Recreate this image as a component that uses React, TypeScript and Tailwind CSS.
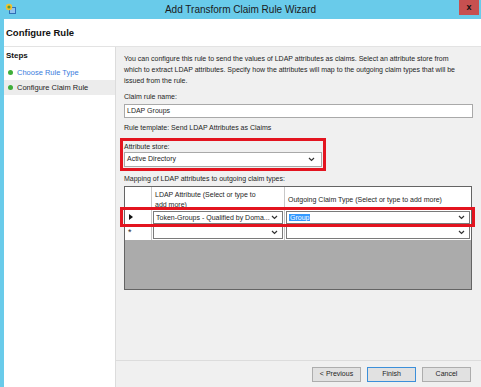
import React from 'react';

const font = { fontFamily: '"Liberation Sans", Arial, sans-serif' };

function Chevron({ className = '' }: { className?: string }) {
  return (
    <svg width="7" height="5" viewBox="0 0 7 5" className={className}>
      <path d="M1 1 L3.5 3.5 L6 1" fill="none" stroke="#333" strokeWidth="1.2" />
    </svg>
  );
}

function Combo({ text, selected }: { text?: string; selected?: boolean }) {
  return (
    <div className="flex h-[13px] w-full items-center justify-between border border-[#7a7a7a] bg-white pl-[2px] pr-[4px]">
      <span className="truncate text-[7px] leading-[9px] text-[#1e1e1e]">
        {selected ? <span className="bg-[#3399ff] px-[1px] text-white">{text}</span> : text}
      </span>
      <Chevron />
    </div>
  );
}

function WizardButton({ label, primary }: { label: string; primary?: boolean }) {
  return (
    <button
      type="button"
      className={`h-[15px] w-[49px] border bg-[#e1e1e1] text-[7px] text-[#1e1e1e] ${
        primary ? 'border-[#3c8fd9]' : 'border-[#adadad]'
      }`}
    >
      {label}
    </button>
  );
}

export default function App() {
  return (
    <div className="flex h-[387px] w-[481px] flex-col overflow-hidden bg-[#69cbea]" style={font}>
      {/* Title bar */}
      <div className="relative flex h-[19px] shrink-0 items-center justify-center">
        <svg width="12" height="12" viewBox="0 0 12 12" className="absolute left-[5px] top-[3px]">
          <rect x="4" y="4" width="7" height="7" fill="#2f6fb7" />
          <rect x="5" y="5" width="5" height="5" fill="#8fc3ef" />
          <circle cx="4" cy="4" r="3.2" fill="#f2c230" />
          <circle cx="4" cy="4" r="1.6" fill="#5a9a3c" />
        </svg>
        <span className="text-[10px] text-[#1a1a1a]">Add Transform Claim Rule Wizard</span>
        <div className="absolute right-[2px] top-0 flex h-[15px] w-[20px] items-center justify-center bg-[#c75050] text-[9px] font-bold leading-none text-[#111]">
          x
        </div>
      </div>

      <div className="ml-[4px] flex min-h-0 flex-1 flex-col bg-white">
        {/* Page header */}
        <div className="flex h-[28px] shrink-0 items-center border-b border-[#e3e3e3] pl-[2px] pt-[2px]">
          <span className="text-[9.5px] font-bold text-[#111]">Configure Rule</span>
        </div>

        <div className="flex min-h-0 flex-1">
          {/* Steps */}
          <div className="w-[111px] shrink-0 bg-white pt-[4px]">
            <div className="pl-[2px] text-[8px] font-bold leading-[10px] text-[#111]">Steps</div>
            <div className="mt-[4px] flex h-[15px] items-center gap-[4px] pl-[4px]">
              <span className="h-[5px] w-[5px] rounded-full bg-[#3fae3a]" />
              <span className="text-[7.5px] text-[#3b7ddd]">Choose Rule Type</span>
            </div>
            <div className="flex h-[15px] items-center gap-[4px] bg-[#ececec] pl-[4px]">
              <span className="h-[5px] w-[5px] rounded-full bg-[#3fae3a]" />
              <span className="text-[7.5px] text-[#1e1e1e]">Configure Claim Rule</span>
            </div>
          </div>

          {/* Main panel */}
          <div className="flex min-w-0 flex-1 flex-col border-l border-[#dcdcdc] bg-[#f0f0f0]">
            <div className="flex-1 pl-[8px] pr-[8px] pt-[6px] text-[7px] text-[#1e1e1e]">
              <p className="leading-[11px]">
                You can configure this rule to send the values of LDAP attributes as claims. Select an attribute store from
                <br />
                which to extract LDAP attributes. Specify how the attributes will map to the outgoing claim types that will be
                <br />
                issued from the rule.
              </p>
              <div className="mt-[6px] leading-[10px]">Claim rule name:</div>
              <div className="mt-[2px] flex h-[14px] items-center border border-[#a9a9a9] bg-white pl-[2px]">
                LDAP Groups
              </div>
              <div className="mt-[5px] leading-[10px]">Rule template: Send LDAP Attributes as Claims</div>

              <div className="ml-[-4px] mt-[5px] w-[206px] border-[3px] border-[#e3141f] px-[1px] pb-[1px]">
                <div className="leading-[11px]">Attribute store:</div>
                <div className="flex h-[15px] items-center justify-between border border-[#a9a9a9] bg-white pl-[2px] pr-[6px]">
                  <span>Active Directory</span>
                  <Chevron />
                </div>
              </div>

              <div className="mt-[3px] leading-[10px]">Mapping of LDAP attributes to outgoing claim types:</div>

              {/* Grid */}
              <div className="relative mt-[2px] flex h-[104px] w-[348px] flex-col border border-[#646464] bg-[#ababab]">
                <div className="flex h-[23px] bg-white">
                  <div className="w-[27px] border-b border-r border-[#c8c8c8]" />
                  <div className="w-[133px] overflow-hidden border-b border-r border-[#c8c8c8] pl-[3px] pt-[3px] leading-[10px]">
                    LDAP Attribute (Select or type to
                    <br />
                    add more)
                  </div>
                  <div className="flex flex-1 items-center border-b border-[#c8c8c8] pl-[3px] pt-[4px]">
                    Outgoing Claim Type (Select or type to add more)
                  </div>
                </div>
                <div className="flex h-[15px] bg-white">
                  <div className="flex w-[27px] items-center border-b border-r border-[#c8c8c8] pl-[4px]">
                    <svg width="4" height="6" viewBox="0 0 4 6">
                      <path d="M0 0 L4 3 L0 6 Z" fill="#111" />
                    </svg>
                  </div>
                  <div className="w-[133px] border-b border-r border-[#c8c8c8] p-[1px]">
                    <Combo text="Token-Groups - Qualified by Doma..." />
                  </div>
                  <div className="flex-1 border-b border-[#c8c8c8] p-[1px]">
                    <Combo text="Group" selected />
                  </div>
                </div>
                <div className="flex h-[15px] bg-white">
                  <div className="flex w-[27px] items-center border-r border-[#c8c8c8] pl-[3px] text-[9px] leading-none">
                    *
                  </div>
                  <div className="w-[133px] border-r border-[#c8c8c8] p-[1px]">
                    <Combo />
                  </div>
                  <div className="flex-1 p-[1px]">
                    <Combo />
                  </div>
                </div>
                <div className="flex-1" />
                <div className="pointer-events-none absolute left-[-5px] top-[20px] h-[20px] w-[355px] border-[3px] border-[#e3141f]" />
              </div>
            </div>

            {/* Footer */}
            <div className="flex h-[27px] shrink-0 items-center justify-end gap-[6px] border-t border-[#dcdcdc] pr-[10px] pt-[1px]">
              <WizardButton label="< Previous" />
              <WizardButton label="Finish" primary />
              <WizardButton label="Cancel" />
            </div>
          </div>
        </div>
      </div>
    </div>
  );
}
